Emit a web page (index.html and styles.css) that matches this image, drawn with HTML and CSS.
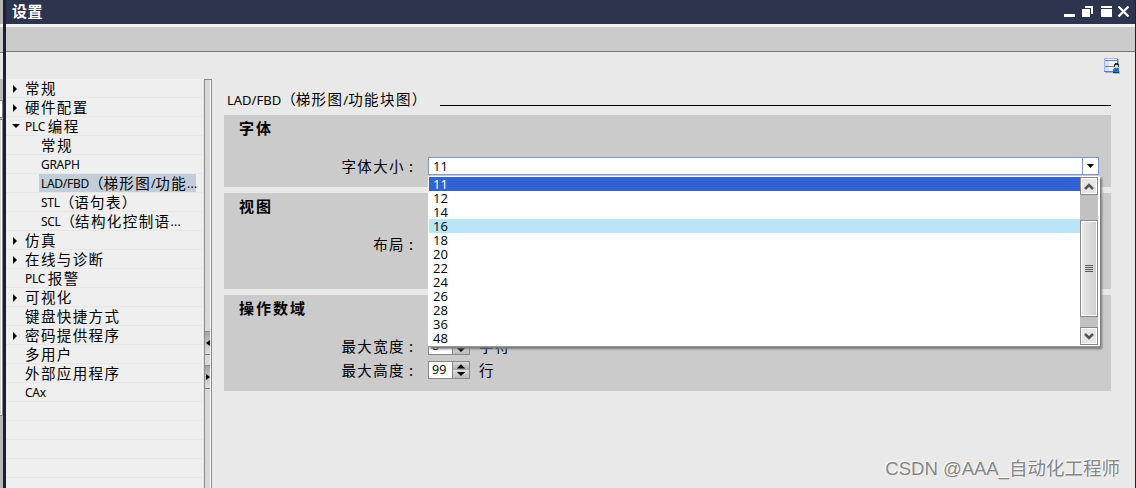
FILE: index.html
```html
<!DOCTYPE html>
<html lang="zh-CN">
<head>
    <meta charset="utf-8">
    <title>设置</title>
    <link rel="stylesheet" href="styles.css">
</head>
<body>
    <div class="dock">
        <div class="dock-top"></div>
        <div class="dock-gap"></div>
        <div class="dock-bar"></div>
        <div class="dock-cell"></div>
        <div class="dock-list"></div>
        <div class="dock-bottom"></div>
    </div>
    <div class="window">
        <div class="titlebar">
            <h1>设置</h1>
            <svg class="window-buttons" width="66" height="12" viewBox="0 0 66 12" fill="#fff" shape-rendering="crispEdges">
                <path d="M0 8h11v3H0zM21 0h8v8h-2V2h-6zM18 3h8v8h-8zM37 0h11v2H37zM37 3h11v8H37z"/>
                <path d="M54.500 .5l10 10M64.500 .5l-10 10" stroke="#fff" stroke-width="2.200" shape-rendering="auto"/>
            </svg>
        </div>
        <div class="toolbar"></div>
        <div class="content">
            <ul class="tree">
                <li><i class="arrow"></i><span>常规</span></li>
                <li><i class="arrow"></i><span>硬件配置</span></li>
                <li><i class="arrow open"></i><span><b>PLC </b>编程</span></li>
                <li class="child"><span>常规</span></li>
                <li class="child"><span><b>GRAPH</b></span></li>
                <li class="child selected"><span><b>LAD/FBD</b><em>（</em>梯形图<b>/</b>功能<b class="dots">...</b></span></li>
                <li class="child"><span><b>STL</b><em>（</em>语句表<em>）</em></span></li>
                <li class="child"><span><b>SCL</b><em>（</em>结构化控制语<b class="dots">...</b></span></li>
                <li><i class="arrow"></i><span>仿真</span></li>
                <li><i class="arrow"></i><span>在线与诊断</span></li>
                <li><span><b>PLC </b>报警</span></li>
                <li><i class="arrow"></i><span>可视化</span></li>
                <li><span>键盘快捷方式</span></li>
                <li><i class="arrow"></i><span>密码提供程序</span></li>
                <li><span>多用户</span></li>
                <li><span>外部应用程序</span></li>
                <li><span><b>CAx</b></span></li>
                <li></li>
                <li></li>
                <li></li>
                <li></li>
                <li></li>
            </ul>
            <div class="splitter">
                <div class="grip"><svg width="4" height="6" viewBox="0 0 4 6"><path d="M4 0v6L0 3z"/></svg></div>
                <div class="grip"><svg width="4" height="6" viewBox="0 0 4 6"><path d="M0 0v6l4-3z"/></svg></div>
            </div>
            <div class="page">
                <svg class="user-view" width="16" height="16" viewBox="0 0 16 16" shape-rendering="crispEdges">
                    <path fill="#a9b8c6" d="M1 1h14v14H1zM9 13h7v3H9z"/>
                    <path fill="#5f78d0" d="M0 0h14v14H0z"/>
                    <path fill="#f1f4ff" d="M1 1h12v12H1z"/>
                    <path fill="#d5defc" d="M1 3h4v5H1zM1 9h4v4H1z"/>
                    <path fill="#a5b5f2" d="M0 0h14v1H0zM0 0h1v13H0z"/>
                    <path fill="#71809e" d="M1 2h12v1H1zM1 8h12v1H1z"/>
                    <path fill="#1b2b3d" d="M11 5h3v1h1v3h-5V6h1z"/>
                    <path fill="#f6d5b4" d="M11 7h3v3h-3z"/>
                    <path fill="#2473b4" d="M10 10h5v5H9v-4h1z"/>
                    <path fill="#0d3e6e" d="M9 14h6v1H9z"/>
                </svg>
                <h2><span><b>LAD/FBD</b><em>（</em>梯形图<b>/</b>功能块图<em>）</em></span></h2>
                <div class="group font-group">
                    <h3>字体</h3>
                    <div class="field">
                        <label>字体大小<em class="colon">:</em></label>
                        <div class="combo">
                            <span class="value">11</span>
                            <span class="combo-button"><svg width="7" height="4" viewBox="0 0 7 4"><path d="M0 0h7L3.500 4z"/></svg></span>
                            <div class="dropdown">
                                <ul class="options">
                                    <li class="current">11</li>
                                    <li>12</li>
                                    <li>14</li>
                                    <li class="hover">16</li>
                                    <li>18</li>
                                    <li>20</li>
                                    <li>22</li>
                                    <li>24</li>
                                    <li>26</li>
                                    <li>28</li>
                                    <li>36</li>
                                    <li>48</li>
                                </ul>
                                <div class="scrollbar">
                                    <div class="scroll-button"><svg width="10" height="7" viewBox="0 0 10 7"><path d="M1 6l4-4 4 4"/></svg></div>
                                    <div class="thumb"><i></i><i></i><i></i><i></i></div>
                                    <div class="scroll-button"><svg width="10" height="7" viewBox="0 0 10 7"><path d="M1 1l4 4 4-4"/></svg></div>
                                </div>
                            </div>
                        </div>
                    </div>
                </div>
                <div class="group view-group">
                    <h3>视图</h3>
                    <div class="field">
                        <label>布局<em class="colon">:</em></label>
                    </div>
                </div>
                <div class="group operand-group">
                    <h3>操作数域</h3>
                    <div class="field">
                        <label>最大宽度<em class="colon">:</em></label>
                        <div class="spinner"><span>8</span><svg width="17" height="16" viewBox="0 0 17 16"><path d="M8.500 2l4.500 4.500H4zM4 10h9l-4.500 4.500z"/></svg></div>
                        <span class="unit">字符</span>
                    </div>
                    <div class="field">
                        <label>最大高度<em class="colon">:</em></label>
                        <div class="spinner"><span>99</span><svg width="17" height="16" viewBox="0 0 17 16"><path d="M8.500 2l4.500 4.500H4zM4 10h9l-4.500 4.500z"/></svg></div>
                        <span class="unit">行</span>
                    </div>
                </div>
                <div class="watermark">CSDN @AAA_自动化工程师</div>
            </div>
        </div>
    </div>
</body>
</html>
```

FILE: styles.css
```css
* { box-sizing: border-box; }
body { display: flex; width: 1136px; height: 488px; margin: 0; overflow: hidden; background: #e9e9e9; color: #000; font: 14.5px/19px "Noto Sans CJK SC", sans-serif; letter-spacing: 1.4px; }
ul { list-style: none; margin: 0; padding: 0; }
h1, h2, h3 { margin: 0; }
b { font: 12px/14px "Noto Sans", "Open Sans", sans-serif; letter-spacing: -0.3px; vertical-align: 1px; white-space: pre; }
em { font-style: normal; letter-spacing: 0; }
svg { display: block; flex: none; }

.dock { width: 3px; flex: none; display: flex; flex-direction: column; background: #b7b7b7; }
.dock-top { height: 24px; background: #b7b7b7; }
.dock-gap { height: 55px; background: #e6e6e6; border-top: 3px solid #f2f2f2; }
.dock-gap::before { content: ""; display: block; height: 25px; background: #cbcbcb; border-bottom: 1px solid #777; }
.dock-bar { height: 21px; background: #b9b9b9; }
.dock-cell { height: 18px; margin-bottom: 1px; background: #fff; border: 1px solid #888; border-left: 0; }
.dock-list { height: 297px; background: #d8d8d8; border: 1px solid #888; border-left: 0; box-shadow: inset -1px -1px #fff; }
.dock-bottom { flex: 1; background: #b7b7b7; }

.window { flex: 1; display: flex; flex-direction: column; border-left: 3px solid #1b2033; border-right: 1px solid #1b2033; }
.titlebar { height: 24px; flex: none; display: flex; justify-content: space-between; background: #2d344d; }
.titlebar h1 { padding-left: 6px; color: #fff; font-size: 15px; font-weight: 700; line-height: 21px; letter-spacing: 0.5px; }
.window-buttons { margin: 6px 5px 0 0; }
.toolbar { height: 28px; flex: none; background: #cbcbcb; border-top: 3px solid #f2f2f2; border-bottom: 1px solid #777; }
.content { flex: 1; min-height: 0; display: flex; }

.tree { width: 197px; height: 409px; margin-top: 27px; overflow: hidden; background: #efefef; }
.tree li { display: flex; height: 19px; padding-left: 19px; border-bottom: 1px solid #e7e7e7; white-space: nowrap; line-height: 17px; }
.tree li.child { padding-left: 33px; }
.tree li.child span { padding-left: 2px; }
.tree li.selected span { width: 157px; height: 18px; background: #c3cdd8; }
.tree .dots { letter-spacing: 0.3px; }
.arrow { width: 0; height: 8px; margin: 6px 8px 0 -12px; border: 4px solid transparent; border-left: 4px solid #000; border-right: 0; }
.arrow.open { width: 8px; height: 4px; margin: 7px 5px 0 -13px; border: 4px solid transparent; border-top: 4px solid #000; border-bottom: 0; }

.splitter { width: 8px; margin: 27px 0 0 1px; flex: none; display: flex; flex-direction: column; gap: 10px; padding-top: 251px; background: #d9d9d9; border: solid #898989; border-width: 1px 1px 0; box-shadow: inset -1px 0 #fff; }
.grip { width: 5px; height: 24px; display: flex; align-items: center; justify-content: center; background: linear-gradient(#a5a5a5, #dedede); border-top: 1px solid #898989; border-bottom: 1px solid #777; }

.page { flex: 1; display: flex; flex-direction: column; padding: 6px 24px 0 12px; }
.user-view { margin: 0 -9px 0 0; align-self: flex-end; }
h2 { display: flex; align-items: center; gap: 10px; height: 19px; margin-top: 16px; padding-left: 3px; font-size: 14.5px; font-weight: 400; }
h2 span { width: 203px; margin-top: -2px; white-space: nowrap; }
h2 b { font-size: 13px; letter-spacing: 0; vertical-align: 0; }
h2::after { content: ""; flex: 1; height: 1px; margin-top: 11px; background: #000; }
.group { background: #cbcbcb; margin-bottom: 6px; }
.font-group { height: 72px; margin-top: 6px; }
.view-group { height: 96px; }
.operand-group { height: 96px; margin: 0; }
h3 { height: 39px; padding: 3px 0 0 15px; font-size: 15px; line-height: 20px; letter-spacing: 2px; }
.field { display: flex; height: 24px; padding-right: 12px; line-height: 23px; }
label { width: 204px; flex: none; text-align: right; white-space: nowrap; }
.colon { display: inline-block; width: 19px; margin-right: 4px; padding-left: 4px; text-align: left; }

.combo { position: relative; flex: 1; display: flex; justify-content: space-between; height: 18px; margin-top: 3px; background: #fff; border: 1px solid #7f97c5; }
.value, .options, .spinner { font: 13px/16px "Open Sans", "Noto Sans", sans-serif; letter-spacing: 0; }
.value { padding-left: 4px; line-height: 17px; }
.combo-button { width: 16px; display: flex; align-items: center; justify-content: center; border-left: 1px solid #7f97c5; }
.dropdown { position: absolute; z-index: 1; top: 18px; left: -1px; width: 672px; height: 171px; display: flex; padding: 1px 2px 1px 1px; background: #fff; border-bottom: 1px solid #999; box-shadow: 2px 2px 2px #777; }
.options { flex: 1; }
.options li { height: 14px; padding-left: 4px; line-height: 14px; }
.options .current { background: #3163d2; color: #fff; }
.options .hover { background: #bae5f9; }
.scrollbar { width: 18px; display: flex; flex-direction: column; background: #c1c1c1; }
.scroll-button { height: 18px; display: flex; align-items: center; justify-content: center; background: #e6e6e6; border: 1px solid #898989; box-shadow: inset 0 0 0 1px #fff; }
.scroll-button path { fill: none; stroke: #555; stroke-width: 2.5; }
.thumb { height: 97px; margin: 25px 0 10px; display: flex; flex-direction: column; align-items: center; justify-content: center; gap: 1px; background: linear-gradient(90deg, #eaeaea, #cdcdcd); border: 1px solid #898989; box-shadow: inset 0 0 0 1px #fff; }
.thumb i { width: 8px; height: 1px; background: #555; }

.spinner { display: flex; width: 42px; height: 18px; margin-top: 3px; background: #fff; border: 1px solid #888; }
.spinner span { width: 23px; padding-left: 3px; font-size: 12.5px; }
.spinner svg { background: linear-gradient(#ddd, #a9a9a9 50%, #ddd 50%, #bbb); border-left: 1px solid #888; }
.unit { padding-left: 9px; }

.watermark { margin: 64px -9px 0 0; align-self: flex-end; color: #858585; font: 18.5px/28px "Liberation Sans", "Noto Sans CJK SC", sans-serif; letter-spacing: 0; text-shadow: -1px -1px #fff; white-space: nowrap; }
```
